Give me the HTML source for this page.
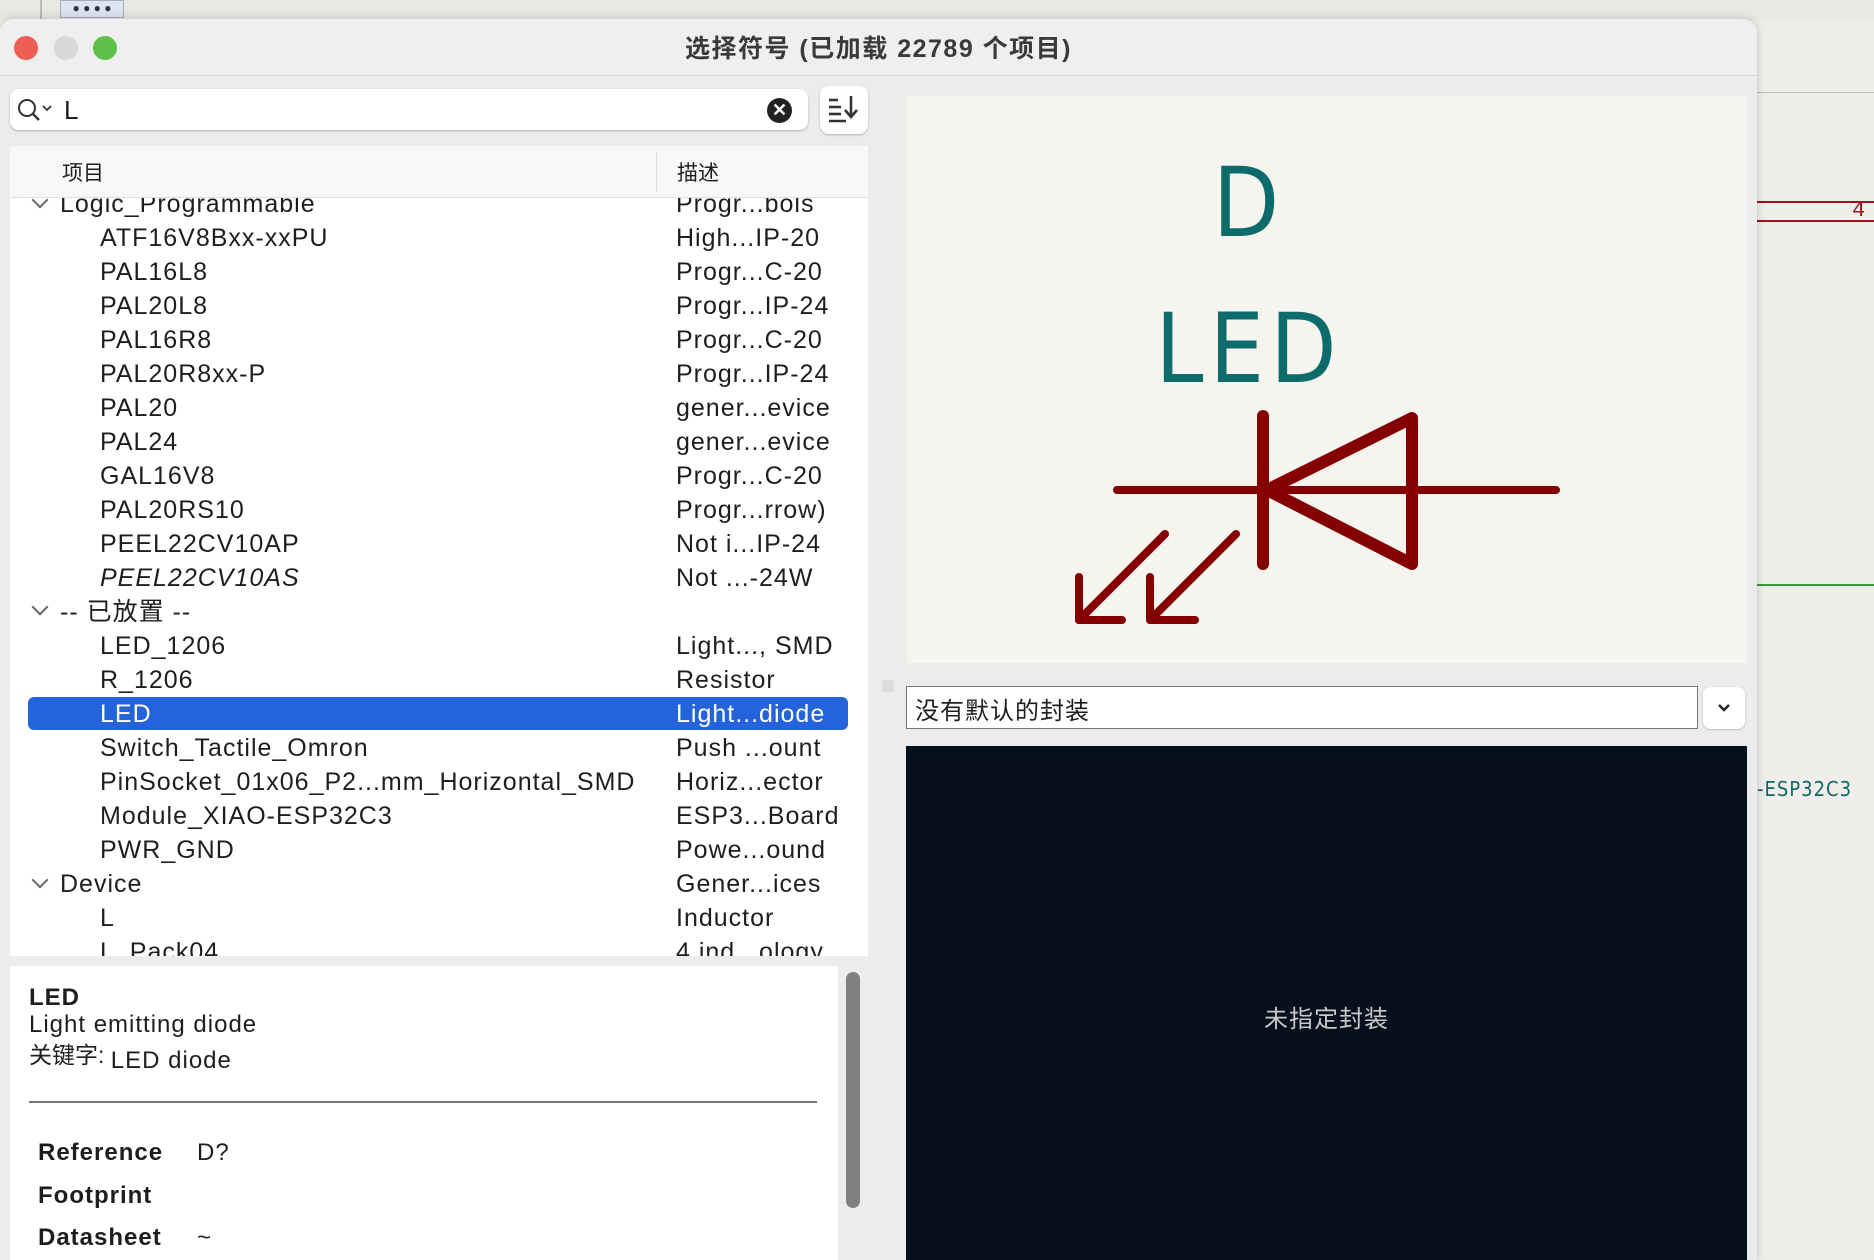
<!DOCTYPE html>
<html><head><meta charset="utf-8">
<style>
*{margin:0;padding:0;box-sizing:border-box}
body{width:1874px;height:1260px;overflow:hidden;background:#efeeea;position:relative;font-family:"Liberation Sans","Noto Sans CJK SC",sans-serif;color:#1e1e1e}
.abs{position:absolute}
.row{position:absolute;height:34px;font-size:25px;line-height:34px;white-space:nowrap;letter-spacing:1px}
.n{left:100px}.p{left:60px}.d{left:676px}
.chev{position:absolute;left:34px;width:12px;height:12px;border-right:2px solid #666;border-bottom:2px solid #666;transform:rotate(45deg)}
.det{letter-spacing:1px}
</style></head><body>
<div class="abs" style="left:0;top:0;width:1874px;height:20px;background:#e9e8e4"></div>
<div class="abs" style="left:40px;top:0;width:2px;height:20px;background:#bbb"></div>
<div class="abs" style="left:60px;top:0;width:64px;height:18px;background:#dde5f0;border:1px solid #aab;font-size:12px;text-align:center;line-height:14px;color:#334">● ● ● ●</div>
<div class="abs" style="left:1757px;top:92px;width:117px;height:1px;background:#bbb"></div>
<div class="abs" style="left:1757px;top:201px;width:117px;height:2px;background:#a01020"></div>
<div class="abs" style="left:1757px;top:220px;width:117px;height:2px;background:#a01020"></div>
<div class="abs" style="left:1852px;top:198px;font-size:22px;color:#a01020;font-family:'Liberation Mono',monospace">4</div>
<div class="abs" style="left:1757px;top:584px;width:117px;height:2px;background:#3a9a3a"></div>
<div class="abs" style="left:1757px;top:777px;font-size:20px;color:#116666;font-family:'DejaVu Sans Condensed','Liberation Sans',sans-serif;letter-spacing:1px">-ESP32C3</div>

<div class="abs" style="left:0;top:19px;width:1757px;height:1241px;background:#ececec;border-radius:14px 14px 0 0;box-shadow:0 0 10px rgba(0,0,0,.2)"></div>
<div class="abs" style="left:0;top:19px;width:1757px;height:57px;background:#efefef;border-radius:14px 14px 0 0;border-bottom:1px solid #d6d6d6"></div>
<div class="abs" style="left:14px;top:36px;width:24px;height:24px;border-radius:50%;background:#ee5e55"></div>
<div class="abs" style="left:54px;top:36px;width:24px;height:24px;border-radius:50%;background:#d8d8d8"></div>
<div class="abs" style="left:93px;top:36px;width:24px;height:24px;border-radius:50%;background:#5dc048"></div>
<div class="abs" style="left:0;top:29px;width:1757px;text-align:center;font-size:25px;font-weight:bold;color:#3a3a3a;letter-spacing:1.5px">选择符号 (已加载 22789 个项目)</div>

<div class="abs" style="left:10px;top:89px;width:798px;height:41px;background:#fff;border-radius:9px;box-shadow:0 1px 2px rgba(0,0,0,.25)"></div>
<svg class="abs" style="left:16px;top:96px" width="44" height="28"><circle cx="11" cy="12" r="8" fill="none" stroke="#333" stroke-width="2"/><line x1="17" y1="18" x2="23" y2="24" stroke="#333" stroke-width="2.4"/><polyline points="27,10 31,14 35,10" fill="none" stroke="#333" stroke-width="1.8"/></svg>
<div class="abs" style="left:64px;top:95px;font-size:26px">L</div>
<div class="abs" style="left:767px;top:98px;width:25px;height:25px;border-radius:50%;background:#222;color:#fff;font-size:18px;line-height:24px;text-align:center;font-weight:bold">✕</div>
<div class="abs" style="left:820px;top:86px;width:48px;height:48px;background:#fff;border-radius:9px;box-shadow:0 1px 2px rgba(0,0,0,.25)"></div>
<svg class="abs" style="left:826px;top:92px" width="36" height="36"><g stroke="#333" stroke-width="2.6" fill="none"><line x1="3" y1="8" x2="12" y2="8"/><line x1="3" y1="15" x2="15" y2="15"/><line x1="3" y1="22" x2="15" y2="22"/><line x1="3" y1="29" x2="20" y2="29"/><line x1="25" y1="4" x2="25" y2="24"/><polyline points="19,18 25,25 31,18"/></g></svg>

<div class="abs" style="left:10px;top:146px;width:858px;height:810px;background:#fff"></div>
<div class="abs" style="left:10px;top:146px;width:858px;height:52px;background:#f8f8f8;border-bottom:1px solid #e0e0e0"></div>
<div class="abs" style="left:656px;top:152px;width:1px;height:40px;background:#ddd"></div>
<div class="abs" style="left:62px;top:157px;font-size:21px">项目</div>
<div class="abs" style="left:677px;top:157px;font-size:21px">描述</div>
<div class="abs" style="left:10px;top:198px;width:858px;height:758px;overflow:hidden">
<div style="position:absolute;left:-10px;top:-198px;width:900px;height:1200px">
<div class="chev" style="top:194px"></div>
<div class="row p" style="top:187px">Logic_Programmable</div><div class="row d" style="top:187px">Progr...bols</div>
<div class="row n" style="top:221px">ATF16V8Bxx-xxPU</div><div class="row d" style="top:221px">High...IP-20</div>
<div class="row n" style="top:255px">PAL16L8</div><div class="row d" style="top:255px">Progr...C-20</div>
<div class="row n" style="top:289px">PAL20L8</div><div class="row d" style="top:289px">Progr...IP-24</div>
<div class="row n" style="top:323px">PAL16R8</div><div class="row d" style="top:323px">Progr...C-20</div>
<div class="row n" style="top:357px">PAL20R8xx-P</div><div class="row d" style="top:357px">Progr...IP-24</div>
<div class="row n" style="top:391px">PAL20</div><div class="row d" style="top:391px">gener...evice</div>
<div class="row n" style="top:425px">PAL24</div><div class="row d" style="top:425px">gener...evice</div>
<div class="row n" style="top:459px">GAL16V8</div><div class="row d" style="top:459px">Progr...C-20</div>
<div class="row n" style="top:493px">PAL20RS10</div><div class="row d" style="top:493px">Progr...rrow)</div>
<div class="row n" style="top:527px">PEEL22CV10AP</div><div class="row d" style="top:527px">Not i...IP-24</div>
<div class="row n" style="top:561px;font-style:italic">PEEL22CV10AS</div><div class="row d" style="top:561px">Not ...-24W</div>
<div class="chev" style="top:601px"></div>
<div class="row p" style="top:595px">-- 已放置 --</div>
<div class="row n" style="top:629px">LED_1206</div><div class="row d" style="top:629px">Light..., SMD</div>
<div class="row n" style="top:663px">R_1206</div><div class="row d" style="top:663px">Resistor</div>
<div class="abs" style="left:28px;top:697px;width:820px;height:33px;background:#2463d9;border-radius:6px"></div>
<div class="row n" style="top:697px;color:#fff">LED</div><div class="row d" style="top:697px;color:#fff">Light...diode</div>
<div class="row n" style="top:731px">Switch_Tactile_Omron</div><div class="row d" style="top:731px">Push ...ount</div>
<div class="row n" style="top:765px">PinSocket_01x06_P2...mm_Horizontal_SMD</div><div class="row d" style="top:765px">Horiz...ector</div>
<div class="row n" style="top:799px">Module_XIAO-ESP32C3</div><div class="row d" style="top:799px">ESP3...Board</div>
<div class="row n" style="top:833px">PWR_GND</div><div class="row d" style="top:833px">Powe...ound</div>
<div class="chev" style="top:874px"></div>
<div class="row p" style="top:867px">Device</div><div class="row d" style="top:867px">Gener...ices</div>
<div class="row n" style="top:901px">L</div><div class="row d" style="top:901px">Inductor</div>
<div class="row n" style="top:935px">L_Pack04</div><div class="row d" style="top:935px">4 ind...ology</div>
</div></div>

<div class="abs" style="left:10px;top:966px;width:828px;height:294px;background:#fff"></div>
<div class="abs" style="left:846px;top:972px;width:14px;height:236px;background:#808080;border-radius:7px"></div>
<div class="abs det" style="left:29px;top:984px;font-size:24px;font-weight:bold">LED</div>
<div class="abs det" style="left:29px;top:1011px;font-size:24px">Light emitting diode</div>
<div class="abs" style="left:29px;top:1036px;font-size:23px">关键字: <span class="det" style="position:relative;top:5px;font-size:24px">LED diode</span></div>
<div class="abs" style="left:29px;top:1101px;width:788px;height:2px;background:#777"></div>
<div class="abs det" style="left:38px;top:1139px;font-size:24px;font-weight:bold">Reference</div><div class="abs det" style="left:197px;top:1139px;font-size:24px">D?</div>
<div class="abs det" style="left:38px;top:1182px;font-size:24px;font-weight:bold">Footprint</div>
<div class="abs det" style="left:38px;top:1224px;font-size:24px;font-weight:bold">Datasheet</div><div class="abs" style="left:197px;top:1224px;font-size:24px">~</div>

<div class="abs" style="left:907px;top:96px;width:840px;height:567px;background:#f5f4ef"></div>
<svg class="abs" style="left:907px;top:96px" width="840" height="567">
<text x="339" y="140" font-family="DejaVu Sans Condensed,Liberation Sans,sans-serif" font-size="96" fill="#0e6b6b" text-anchor="middle">D</text>
<text x="342" y="286" font-family="DejaVu Sans Condensed,Liberation Sans,sans-serif" font-size="96" fill="#0e6b6b" text-anchor="middle" letter-spacing="6">LED</text>
<g stroke="#850000" stroke-linecap="round" stroke-linejoin="round" fill="none">
<line x1="210" y1="394" x2="649" y2="394" stroke-width="8"/>
<line x1="356" y1="320" x2="356" y2="468" stroke-width="12"/>
<polygon points="505,322 505,468 360,394" stroke-width="12"/>
<g stroke-width="8"><line x1="258" y1="438" x2="172" y2="524"/><polyline points="172,481 172,524 215,524"/>
<line x1="329" y1="438" x2="243" y2="524"/><polyline points="243,481 243,524 288,524"/></g>
</g></svg>

<div class="abs" style="left:882px;top:680px;width:12px;height:12px;border-radius:3px;background:#ddd"></div>
<div class="abs" style="left:906px;top:686px;width:792px;height:43px;background:#fff;border:1px solid #777"></div>
<div class="abs" style="left:915px;top:691px;font-size:24px;letter-spacing:1px">没有默认的封装</div>
<div class="abs" style="left:1703px;top:687px;width:42px;height:42px;background:#fff;border-radius:8px;box-shadow:0 1px 2px rgba(0,0,0,.2)"></div>
<svg class="abs" style="left:1716px;top:700px" width="16" height="16"><polyline points="3,5 8,10 13,5" fill="none" stroke="#222" stroke-width="2.4"/></svg>
<div class="abs" style="left:906px;top:746px;width:841px;height:514px;background:#06101c"></div>
<div class="abs" style="left:906px;top:999px;width:841px;text-align:center;font-size:24px;color:#c8c8c8;letter-spacing:1px">未指定封装</div>
</body></html>
